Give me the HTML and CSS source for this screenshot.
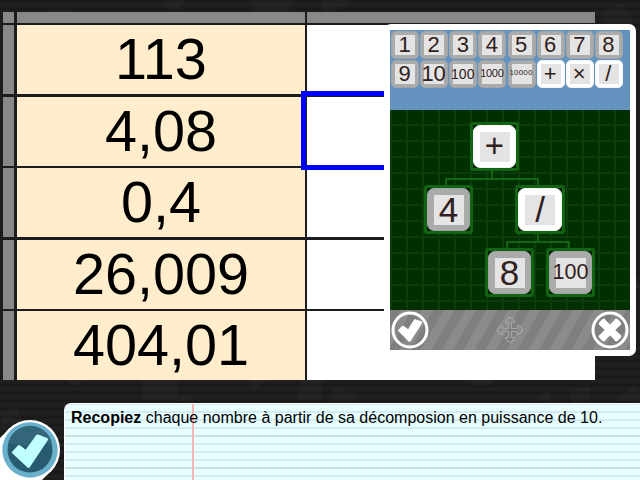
FILE: index.html
```html
<!DOCTYPE html>
<html lang="fr">
<head>
<meta charset="utf-8">
<title>Exercice</title>
<link rel="stylesheet" href="styles.css">
</head>
<body>
<svg class="backdrop" width="640" height="480">
  <g fill="#fff" fill-opacity=".025">
    <path d="M40 15l25-8 4 16-28 8zM170-5h20l-12 16-15-4zM248 0h47l-6 12h-34zM320-4h42l-30 16h-10zM600 15l20-12 15 18-22 10z"/>
    <path d="M66 380h24l-18 7zM0 412l17-6 5 15-20 8zM142 380h36v20h-36zM176 400l14-8 5 12zM302 380h20v20h-26zM249 380h18l-14 11zM334 388l25 5-5 10h-26zM470 380h21v5l-20 2zM530 402l18-12 6 13zM570 390l20-3v17h-18zM617 400l16-15 7 7v11z"/>
    <path d="M600 180l20-14 17 19-18 18zM612 270l20-10 8 28-22 4z"/>
  </g>
</svg>
<main class="app">
  <div class="sheet">
    <div class="head"></div><div class="head"></div><div class="head"></div>
    <div class="head"></div><div class="number">113</div><div class="answer"></div>
    <div class="head"></div><div class="number">4,08</div><div class="answer"></div>
    <div class="head"></div><div class="number">0,4</div><div class="answer"></div>
    <div class="head"></div><div class="number">26,009</div><div class="answer"></div>
    <div class="head"></div><div class="number">404,01</div><div class="answer"></div>
  </div>
  <footer class="bottom">
    <div class="badge">
      <svg width="64" height="77" viewBox="0 403 64 77">
        <path d="M0 438L9 429A30 30 0 0 1 52 470L42 480H0Z" fill="#fff"/>
        <circle cx="30" cy="450" r="30" fill="#fff"/>
        <circle cx="30" cy="450" r="27.7" fill="#68b0cc"/>
        <circle cx="30" cy="450" r="22.5" fill="#285a70"/>
        <path d="M8 444a22.5 22.500 0 0 1 44-1l-19 3-23-2z" fill="#336679"/>
        <path d="M13.500 452.500L19 446.500L26 452L37.500 436L46.500 439.500L28.500 466.500Z" fill="#c0ffff" stroke="#c0ffff" stroke-width="3" stroke-linejoin="round"/>
      </svg>
    </div>
    <p class="instruction"><b>Recopiez</b> chaque nombre à partir de sa décomposion en puissance de 10.</p>
  </footer>
</main>
<div class="selection"></div>
<section class="dialog">
  <div class="palette">
    <div class="tile">1</div><div class="tile">2</div><div class="tile">3</div><div class="tile">4</div>
    <div class="tile">5</div><div class="tile">6</div><div class="tile">7</div><div class="tile">8</div>
    <div class="tile">9</div><div class="tile">10</div><div class="tile hundred">100</div><div class="tile thousand">1000</div>
    <div class="tile myriad">10000</div><div class="tile op">+</div><div class="tile op">×</div><div class="tile op">/</div>
  </div>
  <div class="board">
    <svg class="links" width="240" height="200" fill="none" stroke="#146414" stroke-width="2">
      <path d="M102 61v8M56 75v-6h92v6M148 124v8M117 138v-6h62v6"/>
    </svg>
    <div class="node root"><div class="tile op plus">+</div></div>
    <div class="node left"><div class="tile">4</div></div>
    <div class="node right"><div class="tile op">/</div></div>
    <div class="node numerator"><div class="tile">8</div></div>
    <div class="node denominator"><div class="tile hundred">100</div></div>
  </div>
  <div class="toolbar">
    <svg width="40" height="40"><circle cx="20" cy="20" r="17" fill="none" stroke="#fff" stroke-width="3"/><path d="M9.500 20.500L13 17L18.500 21L25 10.500L31 12.500L19.500 30.500Z" fill="#fff" stroke="#fff" stroke-width="2.500" stroke-linejoin="round"/></svg>
    <svg width="40" height="40" fill="none" stroke="#a6a6a6" stroke-width="1.200" stroke-linejoin="round"><path d="M18.500 18.500V12.500H15.500Q16 9 20 7.500Q24 9 24.500 12.500H21.500V18.500H27.500V15.500Q31 16 32.500 20Q31 24 27.500 24.500V21.500H21.500V27.500H24.500Q24 31 20 32.500Q16 31 15.500 27.500H18.500V21.500H12.500V24.500Q9 24 7.500 20Q9 16 12.500 15.500V18.500Z"/></svg>
    <svg width="40" height="40"><circle cx="20" cy="20" r="17" fill="none" stroke="#fff" stroke-width="3"/><path d="M12 12l16 16M28 12l-16 16" stroke="#fff" stroke-width="7.500"/><path d="M10.700 13.700l3-3M26.300 10.700l3 3M10.700 26.300l3 3M29.300 26.300l-3 3" stroke="#fff" stroke-width="4" stroke-linecap="round"/></svg>
  </div>
</section>
</body>
</html>
```
FILE: styles.css
```css
* { box-sizing: border-box; }
body {
  margin: 0;
  width: 640px;
  height: 480px;
  overflow: hidden;
  position: relative;
  font-family: "Liberation Sans", Arial, sans-serif;
  background: repeating-linear-gradient(#1a1a1a 0 3px, #202020 3px 6px, #1c1c1c 6px 8px);
}
.backdrop { position: absolute; inset: 0; }
.app { position: relative; height: 480px; display: flex; flex-direction: column; justify-content: space-between; }
.sheet {
  width: 592px;
  height: 368px;
  margin: 12px 0 0 3px;
  display: grid;
  grid-template-columns: 14px 290px 288px;
  grid-template-rows: 13px 72px 71px 72px 71px 69px;
  background: #1c1b1e;
}
.head { background: #888; margin: 0 0 2px; }
.head:nth-child(3n + 1) { margin-right: 3px; }
.head:nth-child(2) { margin-right: 2px; }
.number {
  margin: 0 2px 2px 0;
  background: #ffedcc;
  font-size: 57.6px;
  line-height: 69px;
  text-align: center;
}
.answer { background: #fff; margin-bottom: 2px; }
.sheet > :nth-child(n + 16) { margin-bottom: 0; }
.sheet > :nth-child(n + 4):nth-child(-n + 6),
.sheet > :nth-child(n + 10):nth-child(-n + 12) { margin-bottom: 3px; }
.selection { position: absolute; left: 301px; top: 91px; width: 100px; height: 79px; border: 5px solid #00f; }
.bottom { height: 77px; display: flex; }
.badge { width: 64px; }
.badge svg { display: block; }
.instruction {
  flex: 1;
  margin: 0;
  padding: 4px 6px;
  border-top: 1px solid #fff;
  border-left: 1px solid #fff;
  border-top-left-radius: 7px;
  font-size: 16px;
  line-height: 19px;
  letter-spacing: .005px;
  white-space: nowrap;
  background:
    linear-gradient(#fab4b4, #fab4b4) 127px 0 / 2px 100% no-repeat,
    linear-gradient(#e9ffff00 31px, #cde0e0 31px 33px, #e9ffff00 33px 63px, #cde0e0 63px 65px, #e9ffff00 65px),
    repeating-linear-gradient(#d2eaf1 0 1px, #e9ffff 1px 7px, #d2eaf1 7px 8px);
}
.dialog {
  position: absolute;
  left: 384px;
  top: 24px;
  width: 252px;
  height: 332px;
  padding: 6px;
  border-radius: 7px;
  background: #fff;
}
.palette {
  height: 80px;
  padding: 1px 6px 0 1px;
  display: grid;
  grid-template-columns: repeat(8, 29.125px);
  grid-template-rows: 29px 29px;
  background: #6593c0;
}
.tile {
  width: 28px;
  height: 28px;
  display: flex;
  align-items: center;
  justify-content: center;
  border-radius: 5px;
  border: 1px solid #a0a4a8;
  color: #302020;
  font-size: 22px;
  line-height: 1;
  white-space: nowrap;
  background: linear-gradient(#e4e4e4, #e4e4e4) center / 20px 20px no-repeat #ababab;
}
.palette .tile { padding-right: 1px; }
.tile.op { border-color: #f4f4f4; background-color: #fff; }
.tile.hundred { font-size: 14px; }
.tile.thousand { font-size: 11px; letter-spacing: -.25px; padding-bottom: 2px; }
.tile.myriad { font-size: 8px; letter-spacing: .2px; padding-bottom: 2px; }
.board {
  position: relative;
  height: 200px;
  background:
    repeating-linear-gradient(90deg, #0c3c0c 0 2px, transparent 2px 16px),
    repeating-linear-gradient(transparent 0 14px, #0c3c0c 14px 16px),
    #003000;
}
.links { position: absolute; left: 0; top: 0; }
.node { position: absolute; width: 49px; height: 49px; padding: 0; border: 3px solid #126312; border-radius: 3px; background: #002400; }
.node .tile { width: 43px; height: 43px; border-radius: 7px; font-size: 35px; background-size: 30px 30px; padding-bottom: 1px; }
.node .tile.hundred { font-size: 21.500px; padding-bottom: 0; }
.node .tile.plus { font-size: 33px; padding-bottom: 3px; }
.root { left: 80px; top: 12px; }
.left { left: 34px; top: 75px; }
.right { left: 125px; top: 75px; width: 50px; }
.right .tile { width: 44px; }
.numerator { left: 95px; top: 138px; }
.denominator { left: 156px; top: 138px; }
.toolbar {
  height: 40px;
  display: flex;
  justify-content: space-between;
  background: repeating-linear-gradient(120deg, #7f7f7f 0 9.300px, #8b8b8b 9.300px 18.600px);
}
```
